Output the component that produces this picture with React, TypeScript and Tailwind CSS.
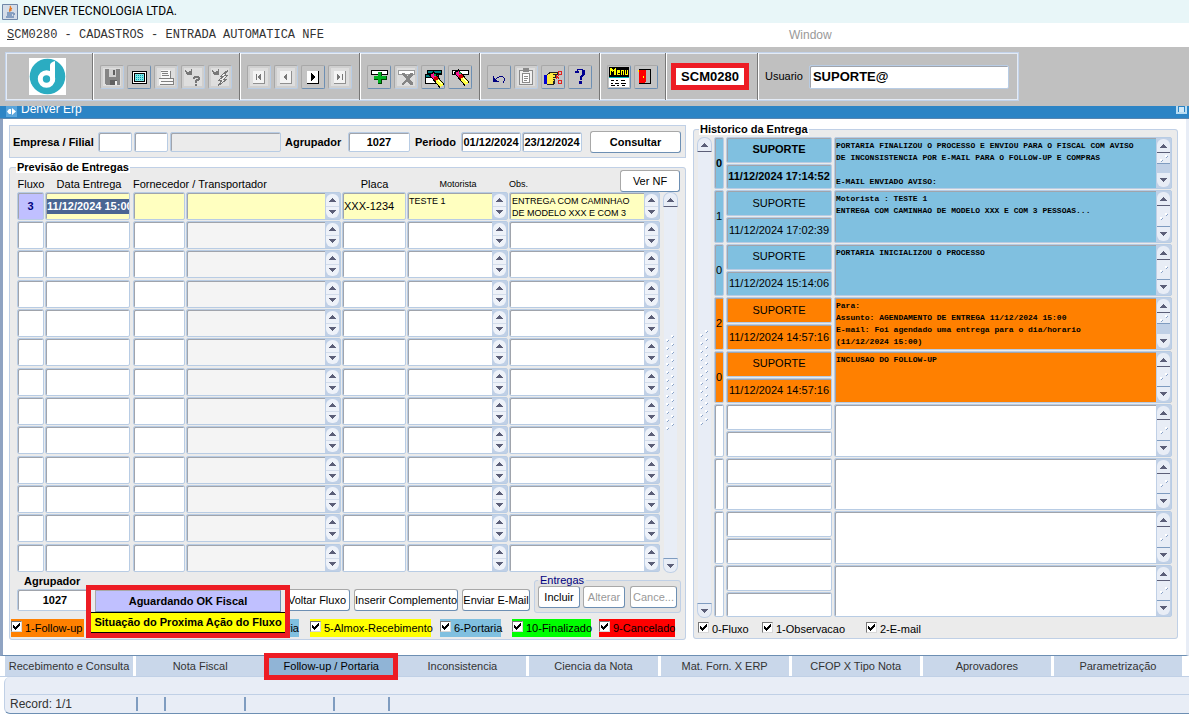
import type { ReactNode } from 'react'
import clsx from 'clsx'

const FIELD = 'block rounded-[2px] border border-[#b8cce4] shadow-[inset_1px_1px_0_#a0a4ac] outline-none'
const BUTTON = 'h-[22px] whitespace-nowrap rounded-[3px] border border-t-[#a8a8a8] border-l-[#a8a8a8] border-r-[#6d8fb3] border-b-[#6d8fb3] bg-white text-center'

const history = [
  { kind: '0', user: 'SUPORTE', date: '11/12/2024 17:14:52', color: 'bg-[#80c0e0]', bold: true, thumb: 'short', text: 'PORTARIA FINALIZOU O PROCESSO E ENVIOU PARA O FISCAL COM AVISO\nDE INCONSISTENCIA POR E-MAIL PARA O FOLLOW-UP E COMPRAS\n\nE-MAIL ENVIADO AVISO:' },
  { kind: '1', user: 'SUPORTE', date: '11/12/2024 17:02:39', color: 'bg-[#80c0e0]', text: 'Motorista : TESTE 1\nENTREGA COM CAMINHAO DE MODELO XXX E COM 3 PESSOAS...' },
  { kind: '0', user: 'SUPORTE', date: '11/12/2024 15:14:06', color: 'bg-[#80c0e0]', text: 'PORTARIA INICIALIZOU O PROCESSO' },
  { kind: '2', user: 'SUPORTE', date: '11/12/2024 14:57:16', color: 'bg-[#ff8000]', thumb: 'short', text: 'Para:\nAssunto: AGENDAMENTO DE ENTREGA 11/12/2024 15:00\nE-mail: Foi agendado uma entrega para o dia/horario\n(11/12/2024 15:00)' },
  { kind: '0', user: 'SUPORTE', date: '11/12/2024 14:57:16', color: 'bg-[#ff8000]', text: 'INCLUSAO DO FOLLOW-UP' },
  ...Array.from({ length: 4 }, () => ({ kind: '', user: '', date: '', color: 'bg-white', text: '' })),
] as { kind: string; user: string; date: string; color: string; text: string; bold?: boolean; thumb?: string }[]

const tabs = ['Recebimento e Consulta', 'Nota Fiscal', 'Follow-up / Portaria', 'Inconsistencia', 'Ciencia da Nota', 'Mat. Forn. X ERP', 'CFOP X Tipo Nota', 'Aprovadores', 'Parametrização']

function Arrow({ down }: { down?: boolean }) {
  return (
    <svg width="7" height="4" viewBox="0 0 7 4" shapeRendering="crispEdges" fill="#5c5f78">
      {down
        ? <path d="M0 0h7v1H0zM1 1h5v1H1zM2 2h3v1H2zM3 3h1v1H3z" />
        : <path d="M3 0h1v1H3zM2 1h3v1H2zM1 2h5v1H1zM0 3h7v1H0z" />}
    </svg>
  )
}

function Spinner() {
  return (
    <div className="flex w-[15px] shrink-0 flex-col bg-[#c0d0e6] p-px">
      <button aria-label="Subir" className="flex flex-1 items-center justify-center rounded-t-[6px] border-b border-[#d3dcea] bg-[#eef2f9]"><Arrow /></button>
      <button aria-label="Descer" className="flex flex-1 items-center justify-center rounded-b-[6px] bg-[#eef2f9]"><Arrow down /></button>
    </div>
  )
}

function MemoScroll({ short }: { short: boolean }) {
  return (
    <div className="flex w-[15px] shrink-0 flex-col bg-[#c0d0e6] p-px">
      <button aria-label="Subir" className="flex h-[14px] items-center justify-center rounded-t-[6px] border-b border-[#5c5f78] bg-[#e8edf6]"><Arrow /></button>
      <div className={clsx('flex items-center justify-center border-b border-[#7f9cc0] bg-[#e8edf6]', short ? 'h-[11px]' : 'flex-1')}>
        <svg width="8" height="7" viewBox="0 0 8 7" shapeRendering="crispEdges">
          <path d="M5 0h2v2H5zM0 4h2v2H0z" fill="#fff" />
          <path d="M7 1h1v1H7zM6 2h1v1H6zM2 5h1v1H2zM1 6h1v1H1z" fill="#8aa3c8" />
        </svg>
      </div>
      {short && <div className="flex-1" />}
      <button aria-label="Descer" className="flex h-[14px] items-center justify-center rounded-b-[6px] bg-[#e8edf6]"><Arrow down /></button>
    </div>
  )
}

function PageScroll({ id }: { id: string }) {
  return (
    <div className="flex w-[15px] shrink-0 flex-col items-stretch">
      <button aria-label="Subir" className="flex h-[15px] items-center justify-center rounded-t-[7px] border border-[#c0d0e6] border-b-[#5c5f78] bg-[#e8edf6]"><Arrow /></button>
      <div className="mx-px flex flex-1 items-center justify-center bg-[#e8edf6]">
        <svg width="10" height="96" shapeRendering="crispEdges">
          <pattern id={id} width="10" height="8" patternUnits="userSpaceOnUse">
            <path d="M5 0h2v2H5zM0 4h2v2H0z" fill="#fff" />
            <path d="M7 1h1v1H7zM6 2h1v1H6zM2 5h1v1H2zM1 6h1v1H1z" fill="#8aa3c8" />
          </pattern>
          <rect width="10" height="96" fill={`url(#${id})`} />
        </svg>
      </div>
      <button aria-label="Descer" className="flex h-[15px] items-center justify-center rounded-b-[7px] border border-[#c0d0e6] border-t-[#7f9cc0] bg-[#e8edf6]"><Arrow down /></button>
    </div>
  )
}

function Check({ label, className }: { label: string; className?: string }) {
  return (
    <label className={clsx('flex h-[18px] items-center gap-[3px] whitespace-nowrap', className)}>
      <span className="relative -mt-[3px] flex">
        <input type="checkbox" defaultChecked className="size-[11px] appearance-none border border-t-[#777] border-l-[#777] border-r-[#d8d8d8] border-b-[#d8d8d8] bg-white" />
        <svg className="pointer-events-none absolute top-[2px] left-[2px]" width="7" height="7" viewBox="0 0 7 7" shapeRendering="crispEdges">
          <path d="M0 2h1v3H0zM1 3h1v3H1zM2 4h1v3H2zM3 3h1v3H3zM4 2h1v3H4zM5 1h1v3H5zM6 0h1v3H6z" />
        </svg>
      </span>
      {label}
    </label>
  )
}

function Tool({ label, disabled, children }: { label: string; disabled?: boolean; children: ReactNode }) {
  return (
    <button
      aria-label={label}
      disabled={disabled}
      className={clsx(
        'size-6 rounded-[2px] border border-t-[#a8a8a8] border-l-[#a8a8a8]',
        disabled ? 'border-r-[#b8cce4] border-b-[#b8cce4] bg-[#cfcfcf]' : 'border-r-[#6d8fb3] border-b-[#6d8fb3] bg-[#c4c4c4]',
      )}
    >
      <svg width="22" height="22" viewBox="0 0 22 22" shapeRendering="crispEdges">
        {disabled && <path d="M2 2h18v18H2z" fill="#dedede" />}
        {children}
      </svg>
    </button>
  )
}

function ToolGroup({ children }: { children: ReactNode }) {
  return <div className="flex items-center gap-[3px] border-l border-[#777] px-[7px] shadow-[inset_1px_0_0_#fff]">{children}</div>
}

function Pencil() {
  return (
    <>
      <path d="M7 5l11 13" fill="none" stroke="#000" strokeWidth="6" />
      <path d="M8 6l3 4" fill="none" stroke="#ff1493" strokeWidth="4" />
      <path d="M11 9l2 3" fill="none" stroke="#d00000" strokeWidth="4" />
      <path d="M13 12l5 6" fill="none" stroke="#ffff40" strokeWidth="4" />
      <path d="M10 6h2v2h-2z" fill="#00a040" />
      <path d="M14 12h1v1h-1zM15 13h1v1h-1zM16 14h1v1h-1zM17 15h1v1h-1z" fill="#fff" />
    </>
  )
}

function Toolbar() {
  return (
    <div className="flex h-[59px] bg-[#c0c0c0] px-[5px] py-[5px]">
      <div className="flex border border-[#c3d3ea] shadow-[inset_0_0_0_1px_#e4ebf5]">
        <div className="flex w-[86px] items-center pl-[23px]">
          <svg width="37" height="37" viewBox="0 0 37 37" role="img" aria-label="Denver">
            <path d="M0 0h37v37H0z" fill="#fff" />
            <circle cx="18.5" cy="18.5" r="17.8" fill="#2bacc1" />
            <circle cx="17.5" cy="21" r="6.2" fill="none" stroke="#fff" strokeWidth="5" />
            <path d="M21 19V7c0-2 2-3 5-4v18c0 2-1 4-3 5z" fill="#fff" />
          </svg>
        </div>
        <ToolGroup>
          <Tool label="Salvar" disabled>
            <path d="M4 3h14l1 1v15H5l-1-1z" fill="#858585" />
            <path d="M8 3h7v8H8z" fill="#d0d0d0" /><path d="M12 4h2v5h-2zM9 14h7v5H9z" fill="#606060" /><path d="M14 15h2v4h-2z" fill="#eee" />
          </Tool>
          <Tool label="Tela">
            <path d="M4 5h15v13H4z" fill="#000" /><path d="M5 6h13v11H5z" fill="#fff" />
            <path d="M6 7h11v9H6z" fill="#000" /><path d="M7 8h9v7H7z" fill="#80e8e8" />
            <path d="M8 9h1v1H8zM10 9h1v1h-1zM12 9h1v1h-1zM14 9h1v1h-1zM8 11h1v1H8zM10 11h1v1h-1zM12 11h1v1h-1zM14 11h1v1h-1zM8 13h1v1H8zM10 13h1v1h-1zM12 13h1v1h-1zM14 13h1v1h-1z" fill="#00a0b0" />
          </Tool>
          <Tool label="Imprimir" disabled>
            <path d="M6 4h9l1 8H6zM4 13h15v6H4z" fill="#f8f8f8" />
            <path d="M6 5h7v1H6zM7 7h6v1H7zM7 9h7v1H7zM4 12h15v1H4zM6 15h12v1H6zM5 18h14v1H5zM18 13h1v6h-1zM15 5h1v7h-1z" fill="#808080" />
          </Tool>
          <Tool label="Entrar consulta" disabled>
            <path d="M3 4h1v2H3zM4 5h1v3H4zM5 6h2v3H5zM7 5h3v4H7zM9 3h1v2H9z" fill="#777" />
            <path d="M12 10h5v2h-5zM11 11h2v2h-2zM16 11h2v3h-2zM14 13h3v2h-3zM13 14h2v3h-2zM13 18h2v2h-2z" fill="#777" />
          </Tool>
          <Tool label="Executar consulta" disabled>
            <path d="M3 4h1v2H3zM4 5h1v3H4zM5 6h2v3H5zM7 5h3v4H7zM9 3h1v2H9z" fill="#777" />
            <path d="M19 4l-7 6h3l-5 4h3l-4 6 9-7h-3l4-4h-3z" fill="#eee" stroke="#777" />
          </Tool>
        </ToolGroup>
        <ToolGroup>
          <Tool label="Primeiro" disabled><path d="M5 5h12v13H5z" fill="#909090" /><path d="M5 5h11v12H5z" fill="#f4f4f4" /><path d="M8 8h1v6H8zM10 10h1v2h-1zM11 9h1v4h-1zM12 8h1v6h-1z" fill="#777" /></Tool>
          <Tool label="Anterior" disabled><path d="M5 5h12v13H5z" fill="#909090" /><path d="M5 5h11v12H5z" fill="#f4f4f4" /><path d="M9 10h1v2H9zM10 9h1v4h-1zM11 8h1v6h-1z" fill="#777" /></Tool>
          <Tool label="Próximo"><path d="M5 5h12v13H5z" fill="#000" /><path d="M5 5h11v12H5z" fill="#fff" /><path d="M9 7h1v8H9zM10 8h1v6h-1zM11 9h1v4h-1zM12 10h1v2h-1z" /></Tool>
          <Tool label="Último" disabled><path d="M5 5h12v13H5z" fill="#909090" /><path d="M5 5h11v12H5z" fill="#f4f4f4" /><path d="M8 8h1v6H8zM9 9h1v4H9zM10 10h1v2h-1zM13 8h1v6h-1z" fill="#777" /></Tool>
        </ToolGroup>
        <ToolGroup>
          <Tool label="Inserir">
            <path d="M3 4h17v5H3z" /><path d="M4 5h15v3H4z" fill="#fff" />
            <path d="M10 6h4v4h5v4h-5v4h-4v-4H6v-4h4z" fill="#004000" /><path d="M10 6h3v4h5v3h-5v4h-3v-4H6v-3h4z" fill="#00b020" />
          </Tool>
          <Tool label="Remover" disabled>
            <path d="M3 4h17v5H3z" fill="#999" /><path d="M4 5h15v3H4z" fill="#fff" />
            <path d="M7 7h3l2 3 3-3h3v2l-4 4 4 4v2h-3l-3-4-3 4H7v-2l4-4-4-4z" fill="#858585" />
          </Tool>
          <Tool label="Limpar bloco">
            <path d="M5 4h15v5H5zM3 8h14v10H3z" /><path d="M6 5h13v2H6z" fill="#008080" /><path d="M4 9h12v2H4z" fill="#008080" /><path d="M4 12h12v5H4z" fill="#fff" />
            <g transform="translate(2 2)"><Pencil /></g>
          </Tool>
          <Tool label="Limpar registro"><path d="M3 4h17v5H3z" /><path d="M4 5h15v3H4z" fill="#fff" /><Pencil /></Tool>
        </ToolGroup>
        <ToolGroup>
          <Tool label="Desfazer">
            <path d="M5 10h1v6H5zM6 15h5v1H6zM6 14h3v1H6zM6 13h2v1H6zM6 12h1v1H6zM8 12h1v1H8zM9 11h2v1H9zM11 10h4v1h-4zM15 11h1v1h-1zM16 12h1v3h-1zM15 15h1v2h-1z" fill="#000080" />
          </Tool>
          <Tool label="Colar" disabled>
            <path d="M4 4h14v15H4zM8 2h6v3H8z" fill="#8a8a8a" /><path d="M5 5h12v13H5z" fill="#f0f0f0" />
            <path d="M8 3h6v3H8zM7 7h8v10H7z" fill="#8a8a8a" /><path d="M8 8h6v8H8z" fill="#fff" /><path d="M9 10h4v1H9zM9 12h4v1H9zM9 14h3v1H9z" fill="#8a8a8a" />
          </Tool>
          <Tool label="Recortar">
            <path d="M2 9h3v9H2z" fill="#0000d0" /><path d="M5 8l3-2h8v3h-2v3h-1v5l-2 2H5z" fill="#222" /><path d="M5 9l4-2h6v1h-4v1h2v2h-2v1h2v1h-2v1h1v1h-1v2l-1 1H5z" fill="#ffe840" />
            <path d="M16 5h3v3h-3zM16 14h3v3h-3zM14 13l3-4M14 9l3 4" fill="none" stroke="#e02020" />
          </Tool>
          <Tool label="Ajuda">
            <path d="M8 3h6v1h2v5h-1v1h-1v1h-1v3h-2v-4h1V9h1V4H9v1h1v2H6V5h2zM10 15h3v3h-3z" fill="#000090" />
          </Tool>
        </ToolGroup>
        <ToolGroup>
          <Tool label="Menu">
            <path d="M1 1h20v10H1z" />
            <path d="M2 2h2v1h1v1h1V3h1V2h1v7H6V5H5v1H4V5H3v4H2zM9 4h3v3h-2v1h2v1H9zM13 4h3v5h-1V5h-1v4h-1zM17 4h1v4h1V4h1v5h-3z" fill="#ff0" />
            <path d="M1 11h20v1H1z" fill="#00b8b8" /><path d="M1 12h20v9H1z" fill="#fff" />
            <path d="M3 14h3v1H3zM8 14h2v1H8zM13 14h4v1h-4zM3 17h2v1H3zM7 17h4v1H7zM13 17h5v1h-5zM3 19h4v1H3zM9 19h2v1H9zM14 19h3v1h-3z" />
          </Tool>
          <Tool label="Sair">
            <path d="M4 3h12v15H4z" /><path d="M10 4h5v13h-5z" fill="#b8b8b8" /><path d="M4 4h7v11l-2 2H4z" fill="#ff0000" /><path d="M8 10h1v2H8zM3 4h1v2H3z" fill="#ff0" />
          </Tool>
        </ToolGroup>
        <div className="flex items-center border-l border-[#777] px-[5px] shadow-[inset_1px_0_0_#fff]">
          <span className="flex h-[27px] w-[78px] items-center justify-center border-[5px] border-[#ed1c24] bg-white text-[13px] font-bold">SCM0280</span>
        </div>
        <label className="ml-[3px] flex items-center border-l border-[#777] pr-[9px] pl-[7px] shadow-[inset_1px_0_0_#fff]">
          Usuario
          <input defaultValue="SUPORTE@" className={clsx(FIELD, 'ml-[6px] h-6 w-[200px] bg-white px-[3px] text-[13px] font-bold')} />
        </label>
      </div>
    </div>
  )
}

function Filters() {
  return (
    <form className="flex h-[33px] items-center border border-[#c0d0e6] bg-[#ebebeb] pt-px pl-[3px] font-bold" onSubmit={e => e.preventDefault()}>
      <label htmlFor="empresa" className="w-[85px] whitespace-nowrap">Empresa / Filial</label>
      <div className="flex gap-[2px]">
        <input id="empresa" className={clsx(FIELD, 'h-5 w-[34px] bg-white')} />
        <input aria-label="Filial" className={clsx(FIELD, 'h-5 w-[34px] bg-white')} />
        <input aria-label="Nome da filial" disabled className={clsx(FIELD, 'h-5 w-[111px] bg-[#ebebeb]')} />
      </div>
      <label htmlFor="agrupador" className="ml-1 w-[63px]">Agrupador</label>
      <input id="agrupador" defaultValue="1027" className={clsx(FIELD, 'h-5 w-[62px] bg-white text-center')} />
      <label htmlFor="periodo" className="ml-[5px] w-[46px]">Periodo</label>
      <div className="flex gap-px">
        <input id="periodo" defaultValue="01/12/2024" className={clsx(FIELD, 'h-5 w-[60px] bg-white text-center')} />
        <input aria-label="Periodo final" defaultValue="23/12/2024" className={clsx(FIELD, 'h-5 w-[60px] bg-white text-center')} />
      </div>
      <button className={clsx(BUTTON, 'ml-[8px] w-[91px]')}>Consultar</button>
    </form>
  )
}

function Deliveries() {
  return (
    <table className="table-fixed border-collapse">
      <colgroup>
        <col className="w-[28px]" /><col className="w-[88px]" /><col className="w-[53px]" /><col className="w-[156px]" /><col className="w-[65px]" /><col className="w-[102px]" /><col className="w-[151px]" />
      </colgroup>
      <thead>
        <tr className="h-[19px] whitespace-nowrap [&>th]:p-0 [&>th]:pt-1 [&>th]:font-normal">
          <th>Fluxo</th>
          <th>Data Entrega</th>
          <th colSpan={2} className="text-left">Fornecedor / Transportador</th>
          <th>Placa</th>
          <th className="text-[9px]">Motorista</th>
          <th className="text-left text-[9px]">Obs.</th>
        </tr>
      </thead>
      <tbody>
        {Array.from({ length: 13 }, (_, i) => {
          const first = i === 0
          const bg = first ? 'bg-[#ffffc0]' : 'bg-white'
          return (
            <tr key={i} className="h-[29px] align-top nth-[3n]:h-[30px] [&>td]:p-0">
              <td><input aria-label="Fluxo" defaultValue={first ? '3' : ''} className={clsx(FIELD, 'h-7 w-[27px] text-center font-bold text-[#000080]', first ? 'bg-[#c0c0ff]' : 'bg-white')} /></td>
              <td>
                <div className={clsx(FIELD, 'flex h-7 w-[85px] items-center pl-px', bg)}>
                  <input aria-label="Data Entrega" defaultValue={first ? '11/12/2024 15:00' : ''} className={clsx('h-[15px] w-full font-bold outline-none', first && 'bg-[#4a6592] text-white')} />
                </div>
              </td>
              <td><input aria-label="Fornecedor" className={clsx(FIELD, 'h-7 w-[52px]', bg)} /></td>
              <td>
                <div className={clsx(FIELD, 'flex h-7 w-[155px]', first ? bg : 'bg-[#f4f4f4]')}>
                  <input aria-label="Transportador" className="min-w-0 flex-1 outline-none" />
                  <Spinner />
                </div>
              </td>
              <td><input aria-label="Placa" defaultValue={first ? 'XXX-1234' : ''} className={clsx(FIELD, 'h-7 w-[64px] px-px', bg)} /></td>
              <td>
                <div className={clsx(FIELD, 'flex h-7 w-[101px]', bg)}>
                  <textarea aria-label="Motorista" defaultValue={first ? 'TESTE 1' : ''} className="min-w-0 flex-1 resize-none overflow-hidden pt-[2px] pl-px text-[9px] leading-3 outline-none" />
                  <Spinner />
                </div>
              </td>
              <td>
                <div className={clsx(FIELD, 'flex h-7 w-[151px]', bg)}>
                  <textarea aria-label="Obs." defaultValue={first ? 'ENTREGA COM CAMINHAO\nDE MODELO XXX E COM 3' : ''} className="min-w-0 flex-1 resize-none overflow-hidden pt-[2px] pl-[2px] text-[9px] leading-3 whitespace-pre outline-none" />
                  <Spinner />
                </div>
              </td>
            </tr>
          )
        })}
      </tbody>
    </table>
  )
}

function DeliveryActions() {
  return (
    <div className="relative">
      <div className="flex h-[40px] items-end pb-[2px] pl-[7px]">
        <div className="w-[267px]">
          <label htmlFor="agrupador-atual" className="ml-[7px] block h-[14px] font-bold">Agrupador</label>
          <input id="agrupador-atual" defaultValue="1027" className={clsx(FIELD, 'h-[22px] w-[76px] bg-white text-center font-bold')} />
        </div>
        <button className={clsx(BUTTON, 'w-[66px]')}>Voltar Fluxo</button>
        <button className={clsx(BUTTON, 'ml-1 w-[104px]')}>Inserir Complemento</button>
        <button className={clsx(BUTTON, 'ml-1 w-[68px]')}>Enviar E-Mail</button>
        <fieldset className="-mb-[2px] ml-[4px] flex h-[39px] rounded-[3px] border border-[#c0d0e6] bg-[#e2e2e2] px-[3px]">
          <legend className="px-[2px] leading-3 text-[#000080]">Entregas</legend>
          <button className={clsx(BUTTON, 'w-[42px]')}>Incluir</button>
          <button disabled className={clsx(BUTTON, 'ml-[3px] w-[42px] text-[#999]')}>Alterar</button>
          <button disabled className={clsx(BUTTON, 'ml-[5px] w-[47px] text-[#999]')}>Cance...</button>
        </fieldset>
      </div>
      <div className="mt-[6px] flex pl-px">
        <Check label="1-Follow-up" className="w-[73px] bg-[#ff8000]" />
        <span className="ml-[204px] flex h-[18px] w-[11px] items-center justify-end bg-[#80c0e0]">ria</span>
        <Check label="5-Almox-Recebimento" className="ml-[11px] w-[121px] bg-[#ffff00]" />
        <Check label="6-Portaria" className="ml-[9px] w-[61px] bg-[#80c0e0]" />
        <Check label="10-Finalizado" className="ml-[11px] w-[79px] bg-[#00ff00]" />
        <Check label="9-Cancelado" className="ml-[8px] w-[76px] bg-[#ff0000]" />
      </div>
      {/* current step with its hint, on top of the two rows */}
      <div className="absolute top-[12px] left-[76px] w-[204px] border-[5px] border-[#ed1c24] bg-[#ebebeb] font-bold">
        <button className="mx-auto block h-[22px] w-[186px] border border-t-[#a8a8a8] border-l-[#a8a8a8] border-r-[#6d8fb3] border-b-[#6d8fb3] bg-[#c0c0ff]">Aguardando OK Fiscal</button>
        <div role="tooltip" className="flex h-[21px] items-center justify-center border-y border-black bg-[#ffff00] whitespace-nowrap">Situação do Proxima Ação do Fluxo</div>
      </div>
    </div>
  )
}

function History() {
  return (
    <fieldset className="min-w-0 flex-1 rounded-[3px] border border-[#c0d0e6] bg-[#ebebeb] px-[3px]">
      <legend className="ml-[2px] bg-white px-px leading-3 font-bold">Historico da Entrega</legend>
      <div className="flex gap-[2px] pt-[2px]">
        <PageScroll id="grip-history" />
        <div className="min-w-0 flex-1 pr-[2px]">
          {history.map((row, i) => (
            <div key={i} className={clsx('flex h-[53px] gap-[2px] pb-px even:h-[54px]', row.bold && 'font-bold')}>
              <input aria-label="Tipo" defaultValue={row.kind} className={clsx(FIELD, 'w-[10px] text-center', row.color)} />
              <div className="flex w-[106px] flex-col gap-px">
                <input aria-label="Usuario" defaultValue={row.user} className={clsx(FIELD, 'min-h-0 flex-1 text-center', row.color)} />
                <input aria-label="Data" defaultValue={row.date} className={clsx(FIELD, 'min-h-0 flex-1 text-center', row.color)} />
              </div>
              <div className={clsx(FIELD, 'flex min-w-0 flex-1', row.color)}>
                <textarea aria-label="Historico" defaultValue={row.text} className="min-w-0 flex-1 resize-none overflow-hidden pt-[2px] pl-px font-['Liberation_Mono',monospace] text-[8px] leading-3 font-bold outline-none" />
                <MemoScroll short={row.thumb === 'short'} />
              </div>
            </div>
          ))}
        </div>
      </div>
      <div className="flex pt-[2px] pl-px">
        <Check label="0-Fluxo" className="w-[64px]" />
        <Check label="1-Observacao" className="w-[104px]" />
        <Check label="2-E-mail" />
      </div>
    </fieldset>
  )
}

export default function App() {
  return (
    <div className="flex flex-col bg-white font-['Liberation_Sans',Arial,sans-serif] text-[11px] leading-[13px] text-black">
      <header className="flex h-[23px] items-center gap-[5px] bg-[#e8f6f8] pl-[2px] font-[Roboto,sans-serif] text-[12px]">
        <svg width="16" height="16" viewBox="0 0 16 16">
          <path d="M.5.5h15v15H.5z" fill="#d5dde8" stroke="#6f87a8" />
          <path d="M8 2c2 2-2 3 0 6M10 4c-2 1-1 2-1 3" fill="none" stroke="#e8751a" strokeWidth="1.2" />
          <path d="M5 9h6M5 11h5M4 13h8M11 9c2 0 2 2 0 2" fill="none" stroke="#39629b" />
        </svg>
        DENVER TECNOLOGIA LTDA.
      </header>
      <nav className="flex h-6 items-center pl-[7px] text-[12px]">
        <a href="#" className="w-[782px] font-['Liberation_Mono',monospace] text-[#333]"><u>S</u>CM0280 - CADASTROS - ENTRADA AUTOMATICA NFE</a>
        <a href="#" className="text-[#999]">Window</a>
      </nav>
      <Toolbar />
      <div className="flex h-[13px] items-start justify-between overflow-hidden border-b border-[#5a86b0] bg-[#2c84c5] pl-[6px]">
        <div className="-mt-[4px] flex items-center gap-1 text-[12px] text-white">
          <svg width="11" height="11" viewBox="0 0 11 11" className="mt-[4px]">
            <path d="M0 0h11v11H0z" fill="#5aa5dc" />
            <path d="M5 3H3L1 5.500l2 2.500h2M6 2v7l4-3.500z" fill="#fff" />
          </svg>
          <h1>Denver Erp</h1>
        </div>
        <button aria-label="Restaurar" className="mr-[2px] h-[8px] w-[11px] border-2 border-t-0 border-[#b8dcf2] bg-[#2c84c5] p-px"><span className="block h-[5px] bg-[#cfe8f8]" /></button>
      </div>
      <main className="flex items-start gap-[7px] border-x-[3px] border-l-[#8fa3c2] border-r-[#e8edf6] border-b border-b-[#6d8fb3] pt-1 pr-[8px] pb-[15px] pl-[6px]">
        <div className="w-[677px] shrink-0 pt-[2px]">
          <Filters />
          <fieldset className="relative mt-[3px] rounded-[3px] border border-[#c0d0e6] bg-[#ebebeb] pb-[2px]">
            <legend className="ml-[6px] bg-white px-px leading-3 font-bold">Previsão de Entregas</legend>
            <button className={clsx(BUTTON, 'absolute -top-[3px] right-[5px] h-5 w-[60px]')}>Ver NF</button>
            <div className="flex gap-[3px] pl-[7px]">
              <Deliveries />
              <div className="flex pt-[19px]"><PageScroll id="grip-deliveries" /></div>
            </div>
            <DeliveryActions />
          </fieldset>
        </div>
        <History />
      </main>
      <nav className="flex h-[21px] gap-[3px] border-b border-[#c0d0e6] bg-white pr-[7px] pl-[5px]">
        {tabs.map(tab => (
          <div key={tab} className="relative flex min-w-0 flex-1">
            <button className={clsx('flex-1 whitespace-nowrap', tab === 'Follow-up / Portaria' ? 'bg-[#90b4d6]' : 'bg-[#c9d7ea] text-[#333]')}>{tab}</button>
            {tab === 'Follow-up / Portaria' && <div className="pointer-events-none absolute -inset-x-[3px] -top-[3px] -bottom-[4px] border-[5px] border-[#ed1c24]" />}
          </div>
        ))}
      </nav>
      <footer className="ml-1 rounded-l-[6px] border-b border-l border-b-[#6d8fb3] border-l-[#c0d0e6] bg-[#e8edf6]">
        <div className="ml-[5px] h-[18px] border-b border-[#c0d0e6]" />
        <div className="flex h-[18px] items-center pl-[5px] text-[12px] text-[#333]">
          <span className="w-[126px]">Record: 1/1</span>
          <span className="h-[14px] w-[28px] border-l-2 border-[#7f9cc0]" />
          <span className="h-[14px] w-[80px] border-l-2 border-[#7f9cc0]" />
          <span className="h-[14px] w-[89px] border-l-2 border-[#7f9cc0]" />
          <span className="h-[14px] w-[55px] border-l-2 border-[#7f9cc0]" />
          <span className="h-[14px] border-l-2 border-[#7f9cc0]" />
        </div>
      </footer>
    </div>
  )
}
